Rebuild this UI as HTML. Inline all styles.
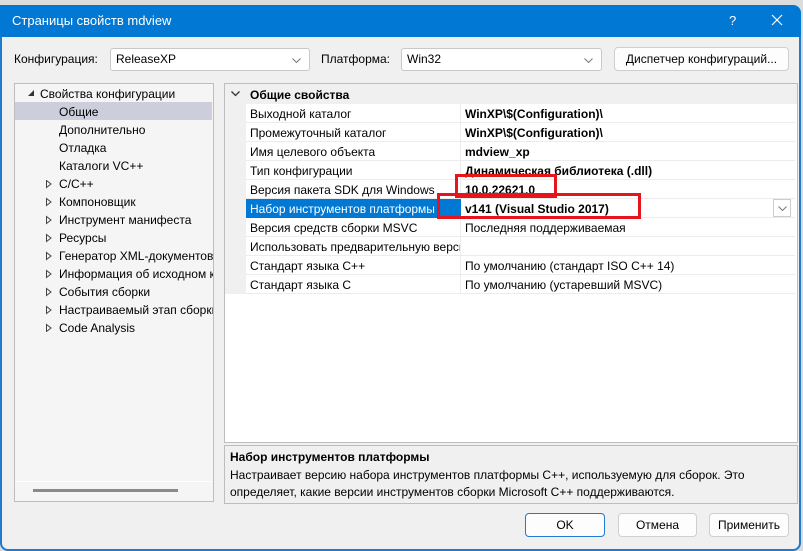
<!DOCTYPE html><html><head><meta charset="utf-8"><style>
*{margin:0;padding:0;box-sizing:border-box}
body{width:803px;height:551px;background:#dcdcdc;font-family:"Liberation Sans",sans-serif;font-size:12px;color:#000;position:relative;overflow:hidden}
.abs{position:absolute}
.win{left:0;top:5px;width:801px;height:546px;background:#f0f0f0;border:2px solid #1f7ad0;border-radius:0 8px 8px 8px}
.title{left:0;top:5px;width:801px;height:32px;background:#0078d4;color:#fff;font-size:13px;border-radius:0 8px 0 0}
.combo{background:#fff;border:1px solid #c8c8c8;border-radius:3px;height:23px;padding:3px 5px}
.btn{background:#fdfdfd;border:1px solid #cfcfcf;border-radius:4px;text-align:center;line-height:22px}
.row{position:absolute;left:246px;width:549px;height:19px;border-bottom:1px solid #ececec;background:#fff}
.row span{position:absolute;left:4px;top:3px;white-space:nowrap}
.row b{position:absolute;left:219px;top:3px;white-space:nowrap}
.row i{position:absolute;left:219px;top:3px;font-style:normal;white-space:nowrap}
.row .sep{position:absolute;left:214px;top:0;width:1px;height:19px;background:#ececec}
.t{position:absolute;left:59px;white-space:nowrap}
.tri{position:absolute;left:45px;top:0}
.red{position:absolute;border:3px solid #e8141c}
</style></head><body>
<div class="abs win"></div>
<div class="abs title"><span class="abs" style="left:12px;top:8px">Страницы свойств mdview</span><span class="abs" style="left:729px;top:8px;font-size:13px">?</span>
<svg class="abs" style="left:771px;top:9px" width="12" height="12"><path d="M1 1L11 11M11 1L1 11" stroke="#fff" stroke-width="1.2"/></svg></div>
<span class="abs" style="left:14px;top:52px">Конфигурация:</span>
<div class="abs combo" style="left:110px;top:48px;width:200px">ReleaseXP<svg class="abs" style="right:8px;top:9px" width="9" height="5"><path d="M0.5 0.5L4.5 4.5L8.5 0.5" stroke="#777" fill="none"/></svg></div>
<span class="abs" style="left:321px;top:52px">Платформа:</span>
<div class="abs combo" style="left:401px;top:48px;width:201px">Win32<svg class="abs" style="right:8px;top:9px" width="9" height="5"><path d="M0.5 0.5L4.5 4.5L8.5 0.5" stroke="#777" fill="none"/></svg></div>
<div class="abs btn" style="left:614px;top:47px;width:175px;height:24px">Диспетчер конфигураций...</div>

<div class="abs" style="left:14px;top:83px;width:200px;height:419px;background:#f5f5f5;border:1px solid #bdbdbd"></div>
<div class="abs" style="left:15px;top:102px;width:197px;height:18px;background:#cccedb"></div>
<svg class="abs" style="left:28px;top:90px" width="7" height="7"><path d="M6 0L6 6L0 6Z" fill="#333"/></svg><span class="t" style="left:40px;top:87px">Свойства конфигурации</span>
<span class="t" style="top:105px">Общие</span>
<span class="t" style="top:123px">Дополнительно</span>
<span class="t" style="top:141px">Отладка</span>
<span class="t" style="top:159px">Каталоги VC++</span>
<div style="position:absolute;left:0;top:0;width:213px;height:340px;overflow:hidden">
<svg class="abs" style="left:46px;top:180px" width="6" height="144"><g fill="none" stroke="#444"><path d="M0.5 0.5L5 4L0.5 7.5Z"/><path d="M0.5 18.5L5 22L0.5 25.5Z"/><path d="M0.5 36.5L5 40L0.5 43.5Z"/><path d="M0.5 54.5L5 58L0.5 61.5Z"/><path d="M0.5 72.5L5 76L0.5 79.5Z"/><path d="M0.5 90.5L5 94L0.5 97.5Z"/><path d="M0.5 108.5L5 112L0.5 115.5Z"/><path d="M0.5 126.5L5 130L0.5 133.5Z"/><path d="M0.5 144.5L5 148L0.5 151.5Z"/></g></svg>
<span class="t" style="top:177px">C/C++</span>
<span class="t" style="top:195px">Компоновщик</span>
<span class="t" style="top:213px">Инструмент манифеста</span>
<span class="t" style="top:231px">Ресурсы</span>
<span class="t" style="top:249px">Генератор XML-документов</span>
<span class="t" style="top:267px">Информация об исходном коде</span>
<span class="t" style="top:285px">События сборки</span>
<span class="t" style="top:303px">Настраиваемый этап сборки</span>
<svg class="abs" style="left:46px;top:324px" width="6" height="8"><path d="M0.5 0.5L5 4L0.5 7.5Z" fill="none" stroke="#444"/></svg>
<span class="t" style="top:321px">Code Analysis</span>
</div>
<div class="abs" style="left:15px;top:481px;width:197px;height:1px;background:#fff"></div>
<div class="abs" style="left:33px;top:489px;width:145px;height:3px;background:#8a8a8a"></div>

<div class="abs" style="left:224px;top:83px;width:574px;height:360px;background:#fff;border:1px solid #bdbdbd"></div>
<div class="abs" style="left:225px;top:84px;width:21px;height:210px;background:#f0f0f0"></div>
<div class="abs" style="left:225px;top:84px;width:572px;height:20px;background:#f0f0f0"></div>
<svg class="abs" style="left:231px;top:91px" width="9" height="6"><path d="M0.5 0.5L4.5 4.5L8.5 0.5" stroke="#333" stroke-width="1.3" fill="none"/></svg>
<b class="abs" style="left:250px;top:88px">Общие свойства</b>
<div class="row" style="top:104px"><div class="sep"></div><span>Выходной каталог</span><b>WinXP\$(Configuration)\</b></div>
<div class="row" style="top:123px"><div class="sep"></div><span>Промежуточный каталог</span><b>WinXP\$(Configuration)\</b></div>
<div class="row" style="top:142px"><div class="sep"></div><span>Имя целевого объекта</span><b>mdview_xp</b></div>
<div class="row" style="top:161px"><div class="sep"></div><span>Тип конфигурации</span><b>Динамическая библиотека (.dll)</b></div>
<div class="row" style="top:180px"><div class="sep"></div><span>Версия пакета SDK для Windows</span><b>10.0.22621.0</b></div>
<div class="row" style="top:199px"><div class="abs" style="left:0;top:0;width:215px;height:19px;background:#0078d4"></div><span style="color:#fff">Набор инструментов платформы</span><b>v141 (Visual Studio 2017)</b><div class="abs" style="left:527px;top:0;width:18px;height:18px;border:1px solid #ccc;background:#fff"><svg class="abs" style="left:4px;top:6px" width="9" height="5"><path d="M0.5 0.5L4.5 4.5L8.5 0.5" stroke="#777" fill="none"/></svg></div></div>
<div class="row" style="top:218px"><div class="sep"></div><span>Версия средств сборки MSVC</span><i>Последняя поддерживаемая</i></div>
<div class="row" style="top:237px"><div class="sep"></div><span style="width:210px;overflow:hidden">Использовать предварительную версию</span></div>
<div class="row" style="top:256px"><div class="sep"></div><span>Стандарт языка C++</span><i>По умолчанию (стандарт ISO C++ 14)</i></div>
<div class="row" style="top:275px"><div class="sep"></div><span>Стандарт языка C</span><i>По умолчанию (устаревший MSVC)</i></div>
<div class="red" style="left:455px;top:174px;width:102px;height:24px"></div>
<div class="red" style="left:437px;top:193px;width:204px;height:26px"></div>

<div class="abs" style="left:224px;top:445px;width:574px;height:59px;border:1px solid #bdbdbd;background:#f0f0f0"></div>
<b class="abs" style="left:230px;top:450px">Набор инструментов платформы</b>
<span class="abs" style="left:230px;top:467px;line-height:17px;width:560px">Настраивает версию набора инструментов платформы C++, используемую для сборок. Это определяет, какие версии инструментов сборки Microsoft C++ поддерживаются.</span>

<div class="abs btn" style="left:525px;top:513px;width:80px;height:24px;border-color:#1f7ad0">OK</div>
<div class="abs btn" style="left:618px;top:513px;width:79px;height:24px">Отмена</div>
<div class="abs btn" style="left:709px;top:513px;width:80px;height:24px">Применить</div>
</body></html>
